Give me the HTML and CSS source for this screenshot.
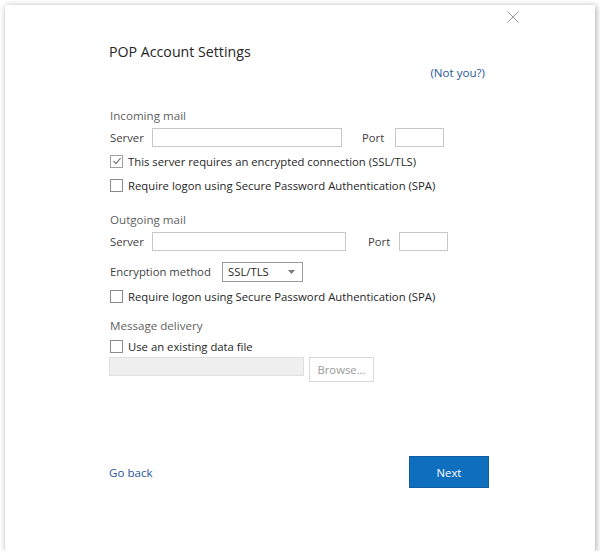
FILE: index.html
```html
<!DOCTYPE html>
<html>
<head>
<meta charset="utf-8">
<link rel="stylesheet" href="styles.css">
</head>
<body>
<div class="dialog">
  <button class="close" aria-label="Close">
    <svg width="12" height="12" viewBox="0 0 12 12"><path d="M0.5 0.5 L11.5 11.5 M11.5 0.5 L0.5 11.5" stroke="#9a9a9a" stroke-width="1" fill="none"/></svg>
  </button>
  <div class="content">
    <h1 class="title">POP Account Settings</h1>
    <div class="notyou-row"><a class="link">(Not you?)</a></div>

    <div class="section-label incoming">Incoming mail</div>
    <div class="row server-row">
      <span class="lbl server-lbl">Server</span>
      <span class="input in-server1"></span>
      <span class="lbl port-lbl1">Port</span>
      <span class="input in-port"></span>
    </div>
    <div class="check-row first">
      <span class="cb checked"><svg width="10" height="10" viewBox="0 0 10 10"><path d="M1.5 5.2 L4 7.6 L8.6 2" stroke="#6f6f6f" stroke-width="1.1" fill="none"/></svg></span>
      <span class="cb-text">This server requires an encrypted connection (SSL/TLS)</span>
    </div>
    <div class="check-row">
      <span class="cb"></span>
      <span class="cb-text">Require logon using Secure Password Authentication (SPA)</span>
    </div>

    <div class="section-label outgoing">Outgoing mail</div>
    <div class="row server-row">
      <span class="lbl server-lbl">Server</span>
      <span class="input in-server2"></span>
      <span class="lbl port-lbl2">Port</span>
      <span class="input in-port"></span>
    </div>
    <div class="row enc-row">
      <span class="lbl enc-lbl">Encryption method</span>
      <span class="select">SSL/TLS<svg class="caret" width="7" height="4" viewBox="0 0 7 4"><path d="M0 0 H7 L3.5 4 Z" fill="#7a7a7a"/></svg></span>
    </div>
    <div class="check-row enc-check">
      <span class="cb"></span>
      <span class="cb-text">Require logon using Secure Password Authentication (SPA)</span>
    </div>

    <div class="section-label delivery">Message delivery</div>
    <div class="check-row data-check">
      <span class="cb"></span>
      <span class="cb-text">Use an existing data file</span>
    </div>
    <div class="row browse-row">
      <span class="input disabled-input"></span>
      <span class="browse">Browse...</span>
    </div>

    <div class="footer">
      <a class="link goback">Go back</a>
      <span class="next">Next</span>
    </div>
  </div>
</div>
</body>
</html>
```

FILE: styles.css
```css
html, body {
  margin: 0;
  padding: 0;
  background: #ffffff;
}
body {
  font-family: "Open Sans", "Noto Sans", "Liberation Sans", sans-serif;
  color: #262626;
  font-size: 11.3px;
}
.dialog {
  position: relative;
  margin: 5px 0 0 5px;
  width: 590px;
  height: 546px;
  background: #fff;
  box-shadow: 1px 1px 6px rgba(0,0,0,0.35);
}
.close {
  position: absolute;
  left: 502px;
  top: 6px;
  width: 12px;
  height: 12px;
  padding: 0;
  border: 0;
  background: none;
  display: flex;
}
.content {
  padding: 36px 0 0 104px;
  width: 376px;
}
.title {
  margin: 0;
  font-size: 14.2px;
  font-weight: 400;
  line-height: 22px;
  color: #262626;
}
.notyou-row {
  display: flex;
  justify-content: flex-end;
  margin-top: 0px;
  height: 20px;
  line-height: 20px;
}
.link {
  color: #2b579a;
  font-size: 11.6px;
  cursor: pointer;
}
.section-label {
  color: #5f5f5f;
  line-height: 18px;
  height: 18px;
  padding-left: 1px;
  font-size: 11.6px;
}
.incoming { margin-top: 24px; }
.outgoing { margin-top: 14px; }
.delivery { margin-top: 9px; }
.row {
  display: flex;
  align-items: center;
  padding-left: 1px;
}
.server-row {
  height: 21px;
  margin-top: 2px;
}
.lbl {
  color: #3f3f3f;
  line-height: 16px;
  flex: none;
}
.server-lbl { width: 42px; }
.input {
  display: block;
  height: 17px;
  border: 1px solid #c8c8c8;
  background: #fff;
  box-sizing: content-box;
  flex: none;
}
.in-server1 { width: 188px; }
.in-server2 { width: 192px; }
.port-lbl1 { margin-left: 20px; width: 33px; }
.port-lbl2 { margin-left: 22px; width: 31px; }
.in-port { width: 47px; }
.check-row {
  display: flex;
  align-items: center;
  height: 24px;
  padding-left: 1px;
}
.check-row.first { margin-top: 1px; }
.cb {
  width: 11px;
  height: 11px;
  border: 1px solid #8a8a8a;
  background: #fff;
  display: flex;
  align-items: center;
  justify-content: center;
  flex: none;
}
.cb.checked { border-color: #a0a0a0; }
.cb-text {
  margin-left: 5px;
  color: #262626;
}
.enc-row {
  margin-top: 9px;
  height: 21px;
}
.enc-lbl { width: 112px; }
.select {
  width: 74px;
  height: 18px;
  border: 1px solid #9a9a9a;
  padding-left: 5px;
  display: flex;
  align-items: center;
  justify-content: space-between;
  color: #262626;
}
.caret { margin-right: 7px; }
.enc-check { margin-top: 2px; }
.data-check { margin-top: 0px; height: 22px; }
.browse-row {
  align-items: flex-start;
  margin-top: 0px;
  padding-left: 0;
}
.disabled-input {
  width: 193px;
  height: 17px;
  background: #efefef;
  border-color: #e0e0e0;
}
.browse {
  margin-left: 5px;
  width: 63px;
  height: 23px;
  border: 1px solid #d9d9d9;
  color: #9a9a9a;
  display: flex;
  align-items: center;
  justify-content: center;
  box-sizing: content-box;
}
.footer {
  display: flex;
  justify-content: space-between;
  align-items: center;
  margin-top: 74px;
  width: 380px;
}
.goback { margin-left: 0; }
.next {
  width: 78px;
  height: 30px;
  background: #106ebe;
  border: 1px solid #0d5ea6;
  color: #fff;
  display: flex;
  align-items: center;
  justify-content: center;
}
```
